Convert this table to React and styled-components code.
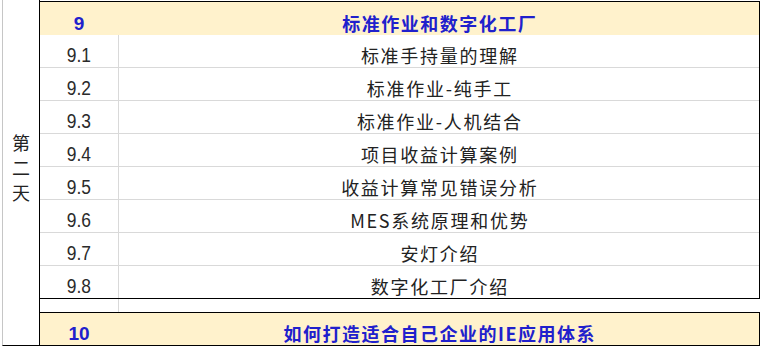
import React from "react";
import styled, { createGlobalStyle, css } from "styled-components";

const GlobalStyle = createGlobalStyle`
  html, body {
    margin: 0;
    padding: 0;
    background: #ffffff;
  }
  body {
    font-family: "Noto Sans CJK SC", "Liberation Sans", sans-serif;
    color: #222222;
  }
`;

const Page = styled.div`
  display: flex;
  width: 762px;
  height: 347px;
  box-sizing: border-box;
`;

const DayColumn = styled.div`
  flex: 0 0 37px;
  height: 346px;
  margin-left: 2px;
  box-sizing: border-box;
  border-left: 1px solid #c6c6c6;
  border-bottom: 1px solid #000000;
  display: flex;
  align-items: center;
  justify-content: center;
  padding-bottom: 10px;
`;

const DayLabel = styled.div`
  font-size: 18px;
  line-height: 25px;
  text-align: center;
  color: #222222;
  width: 20px;
`;

const Sheet = styled.div`
  flex: 0 0 721px;
  height: 346px;
  box-sizing: border-box;
  padding-top: 1px;
  border-left: 1px solid #000000;
  display: flex;
  flex-direction: column;
`;

const Block = styled.div`
  border-top: 1px solid #000000;
  border-right: 1px solid #000000;
  border-bottom: 1px solid #000000;
  display: flex;
  flex-direction: column;
`;

const Row = styled.div`
  display: flex;
  height: ${(p) => p.$height}px;
  box-sizing: border-box;
  background: ${(p) => (p.$header ? "#fff2cc" : "#ffffff")};
  border-bottom: ${(p) => (p.$line ? "1px solid #d9d9d9" : "none")};
`;

const NumCell = styled.div`
  flex: 0 0 ${(p) => (p.$divider ? 79 : 78)}px;
  box-sizing: border-box;
  border-right: ${(p) => (p.$divider ? "1px solid #d9d9d9" : "none")};
  display: flex;
  align-items: flex-end;
  justify-content: center;
  padding-bottom: ${(p) => (p.$header ? 1 : 2)}px;
`;

const TitleCell = styled.div`
  flex: 1;
  display: flex;
  align-items: flex-end;
  justify-content: center;
  padding-bottom: 1px;
  padding-left: ${(p) => (p.$header ? 1 : 0)}px;
`;

const Num = styled.span`
  display: inline-block;
  font-family: "Liberation Sans", Arial, sans-serif;
  line-height: 20px;
  ${(p) =>
    p.$header
      ? css`
          font-size: 19px;
          font-weight: bold;
          color: #2020cc;
        `
      : css`
          font-size: 20px;
          color: #2a2a2a;
          transform: scaleX(0.87);
        `}
`;

const Title = styled.span`
  font-family: "Noto Sans CJK SC", "Liberation Sans", sans-serif;
  font-size: 18px;
  line-height: 21px;
  letter-spacing: ${(p) => (p.$header ? 1.5 : 1.75)}px;
  margin-right: ${(p) => (p.$header ? -1.5 : -1.75)}px;
  font-weight: ${(p) => (p.$header ? 700 : 400)};
  color: ${(p) => (p.$header ? "#2020cc" : "#222222")};
`;

const Spacer = styled.div`
  display: flex;
  height: 13px;
`;

const items = [
  ["9.1", "标准手持量的理解"],
  ["9.2", "标准作业-纯手工"],
  ["9.3", "标准作业-人机结合"],
  ["9.4", "项目收益计算案例"],
  ["9.5", "收益计算常见错误分析"],
  ["9.6", "MES系统原理和优势"],
  ["9.7", "安灯介绍"],
  ["9.8", "数字化工厂介绍"],
];

export default function App() {
  return (
    <React.Fragment>
      <GlobalStyle />
      <Page>
        <DayColumn>
          <DayLabel>
            第<br />二<br />天
          </DayLabel>
        </DayColumn>
        <Sheet>
          <Block>
            <Row $header $height={33}>
              <NumCell $header>
                <Num $header>9</Num>
              </NumCell>
              <TitleCell $header>
                <Title $header>标准作业和数字化工厂</Title>
              </TitleCell>
            </Row>
            {items.map(([num, title], i) => {
              const last = i === items.length - 1;
              return (
                <Row key={num} $line={!last} $height={last ? 32 : 33}>
                  <NumCell $divider>
                    <Num>{num}</Num>
                  </NumCell>
                  <TitleCell>
                    <Title>{title}</Title>
                  </TitleCell>
                </Row>
              );
            })}
          </Block>
          <Spacer>
            <NumCell $divider />
          </Spacer>
          <Block>
            <Row $header $height={32}>
              <NumCell $header>
                <Num $header>10</Num>
              </NumCell>
              <TitleCell $header>
                <Title $header>如何打造适合自己企业的IE应用体系</Title>
              </TitleCell>
            </Row>
          </Block>
        </Sheet>
      </Page>
    </React.Fragment>
  );
}
